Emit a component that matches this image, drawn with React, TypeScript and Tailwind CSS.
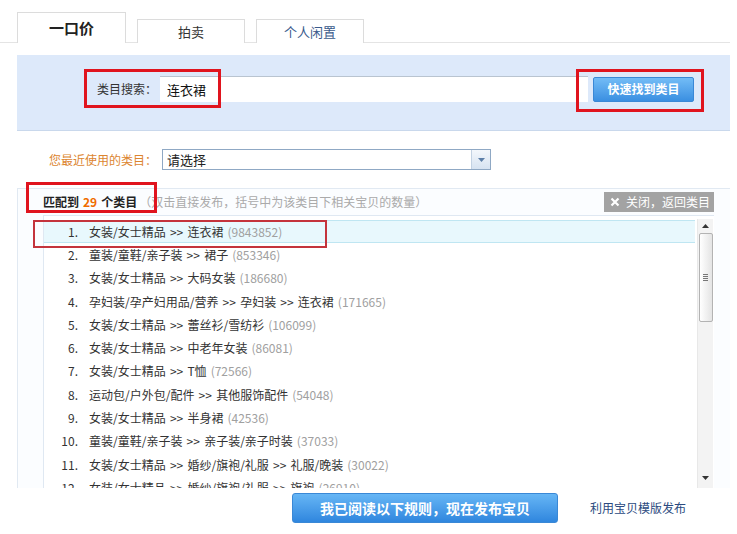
import React from "react";

const rows: [string, string][] = [
  ["女装/女士精品 >> 连衣裙", "9843852"],
  ["童装/童鞋/亲子装 >> 裙子", "853346"],
  ["女装/女士精品 >> 大码女装", "186680"],
  ["孕妇装/孕产妇用品/营养 >> 孕妇装 >> 连衣裙", "171665"],
  ["女装/女士精品 >> 蕾丝衫/雪纺衫", "106099"],
  ["女装/女士精品 >> 中老年女装", "86081"],
  ["女装/女士精品 >> T恤", "72566"],
  ["运动包/户外包/配件 >> 其他服饰配件", "54048"],
  ["女装/女士精品 >> 半身裙", "42536"],
  ["童装/童鞋/亲子装 >> 亲子装/亲子时装", "37033"],
  ["女装/女士精品 >> 婚纱/旗袍/礼服 >> 礼服/晚装", "30022"],
  ["女装/女士精品 >> 婚纱/旗袍/礼服 >> 旗袍", "26910"],
];

const Path: React.FC<{ name: string }> = ({ name }) => {
  const parts = name.split(" >> ");
  return (
    <span className="ml-[11px] text-[#333]">
      {parts.map((p, i) => (
        <React.Fragment key={i}>
          {i > 0 && <span className="mx-[1.5px]"> &gt;&gt; </span>}
          {p}
        </React.Fragment>
      ))}
    </span>
  );
};

const App: React.FC = () => {
  return (
    <div className="relative w-[737px] h-[534px] overflow-hidden bg-white text-[12px] text-[#333] font-['Noto_Sans_CJK_SC',sans-serif]">
      {/* tabs */}
      <div className="w-[730px] h-[43px] border-b border-[#e4e4e4] flex items-end pl-[17px] gap-[11px]">
        <div className="w-[109px] h-[31px] -mb-px bg-white border border-b-0 border-[#dcdcdc] flex items-center justify-center text-[15px] font-bold text-[#222]">
          一口价
        </div>
        <div className="w-[108px] h-[24px] -mb-px bg-white border border-b-0 border-[#dcdcdc] flex items-center justify-center text-[13px] text-[#333]">
          拍卖
        </div>
        <div className="w-[108px] h-[24px] -mb-px bg-white border border-b-0 border-[#dcdcdc] flex items-center justify-center text-[13px] text-[#3a5a8c]">
          个人闲置
        </div>
      </div>

      {/* search panel */}
      <div className="mt-[12px] ml-[17px] w-[713px] h-[76px] bg-[#dde9fa] border-b border-[#c9d8ec] pt-[21px]">
        <div className="flex items-center h-[26px]">
          <div className="ml-[80px] w-[63px] text-[#333]">类目搜索：</div>
          <div className="w-[428px] h-[26px] bg-white border-t border-[#b9c4d0] flex items-center pl-[7px] text-[13px] text-[#111]">
            连衣裙
          </div>
          <button className="ml-[5px] w-[101px] h-[25px] rounded-[2px] bg-linear-to-b from-[#72bcf6] to-[#3a8fe1] border border-[#3a88d6] text-white font-bold text-[12px]">
            快速找到类目
          </button>
        </div>
      </div>

      {/* recent category */}
      <div className="mt-[18px] pl-[49px] flex items-center h-[21px]">
        <div className="w-[113px] text-[#dc8530]">您最近使用的类目：</div>
        <div className="w-[329px] h-[21px] bg-white border border-[#8fa8c4] flex items-center">
          <div className="flex-1 pl-[4px] text-[13px] text-[#222]">请选择</div>
          <div className="w-[19px] h-full border-l border-[#c3d2e3] bg-linear-to-b from-[#f3f7fc] to-[#d7e3f1] flex items-center justify-center">
            <svg width="7" height="4" viewBox="0 0 7 4">
              <path d="M0 0h7L3.5 4z" fill="#5d7fa8" />
            </svg>
          </div>
        </div>
      </div>

      {/* result panel */}
      <div className="mt-[18px] ml-[17px] w-[713px] h-[300px] border-t border-l border-[#e1e9f2] bg-[#fbfdff]">
        <div className="mt-[3px] h-[20px] flex items-center pl-[25px] pr-[16px]">
          <div className="flex-1 flex items-center">
            <span className="font-bold text-[#222]">匹配到</span>
            <span className="font-bold text-[#f06c00] ml-[4px]">29</span>
            <span className="font-bold text-[#222] ml-[4px]">个类目</span>
            <span className="text-[#aaa] ml-[2px]">（双击直接发布，括号中为该类目下相关宝贝的数量）</span>
          </div>
          <div className="w-[110px] h-[20px] bg-[#a3a3a3] flex items-center pl-[6px] text-white">
            <svg width="10" height="10" viewBox="0 0 10 10" className="mr-[6px]">
              <path d="M1.5 1.5l7 7M8.5 1.5l-7 7" stroke="#fff" strokeWidth="2.2" />
            </svg>
            关闭，返回类目
          </div>
        </div>

        <div className="mt-[3px] ml-[25px] w-[671px] h-[273px] border-t border-l border-[#dfe8f2] bg-white flex overflow-hidden">
          <div className="flex-1 pt-[4px] mr-[2px]">
            {rows.map(([name, count], i) => (
              <div
                key={i}
                className={
                  i === 0
                    ? "h-[23.3px] flex items-center whitespace-pre bg-[#e8f8fd] border-y border-[#bfe6f2]"
                    : "h-[23.3px] flex items-center whitespace-pre"
                }
              >
                <span className="w-[34px] text-right text-[#333]">{i + 1}.</span>
                <Path name={name} />
                <span className="ml-[4px] text-[#a0a0a0]">({count})</span>
              </div>
            ))}
          </div>
          <div className="w-[16px] mr-[1px] mt-[3px] bg-[#f3f3f3] border-l border-[#e8e8e8] flex flex-col items-center">
            <div className="h-[14px] flex items-center justify-center">
              <svg width="7" height="4" viewBox="0 0 7 4">
                <path d="M3.5 0L7 4H0z" fill="#333" />
              </svg>
            </div>
            <div className="w-[14px] h-[89px] rounded-[2px] border border-[#b3b3b3] bg-linear-to-r from-[#ffffff] to-[#e4e4e4] flex items-center justify-center">
              <div className="flex flex-col gap-[1px]">
                <div className="w-[5px] h-px bg-[#777]" />
                <div className="w-[5px] h-px bg-[#777]" />
                <div className="w-[5px] h-px bg-[#777]" />
                <div className="w-[5px] h-px bg-[#777]" />
              </div>
            </div>
            <div className="flex-1" />
            <div className="h-[20px] flex items-center justify-center">
              <svg width="7" height="4" viewBox="0 0 7 4">
                <path d="M0 0h7L3.5 4z" fill="#333" />
              </svg>
            </div>
          </div>
        </div>
      </div>

      {/* bottom actions */}
      <div className="mt-[5px] pl-[292px] flex items-center">
        <button className="w-[266px] h-[30px] rounded-[3px] bg-linear-to-b from-[#66b6f5] to-[#2f86de] border border-[#3a88d6] text-white font-bold text-[14px]">
          我已阅读以下规则，现在发布宝贝
        </button>
        <span className="ml-[32px] text-[#2b4a7e]">利用宝贝模版发布</span>
      </div>

      {/* red annotation boxes */}
      <div className="absolute left-[84px] top-[69px] w-[137px] h-[39px] border-[3px] border-[#e0141e]" />
      <div className="absolute left-[576px] top-[69px] w-[128px] h-[43px] border-[3px] border-[#e0141e]" />
      <div className="absolute left-[26px] top-[182px] w-[131px] h-[31px] border-[3px] border-[#e0141e]" />
      <div className="absolute left-[33px] top-[220px] w-[294px] h-[28px] border-2 border-[#c4343c]" />
    </div>
  );
};

export default App;
